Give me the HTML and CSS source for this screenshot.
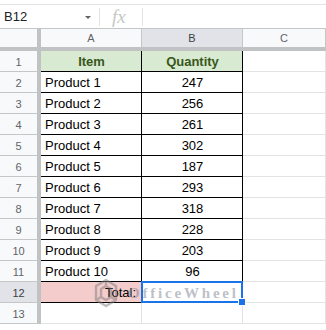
FILE: index.html
```html
<!DOCTYPE html>
<html lang="en">
<head>
    <meta charset="UTF-8">
    <title>Sheet</title>
    <link rel="stylesheet" href="styles.css">
</head>
<body>
    <div class="topbar">
        <div class="namebox">
            <span>B12</span>
            <span class="caret"></span>
        </div>
        <div class="fx">fx</div>
        <div class="formula"></div>
    </div>

    <div class="sheet">
        <div class="row head">
            <div class="rh corner"></div>
            <div class="ch">A</div>
            <div class="ch active">B</div>
            <div class="ch">C</div>
        </div>
        <div class="row">
            <div class="rh">1</div>
            <div class="cell data title">Item</div>
            <div class="cell data title center">Quantity</div>
            <div class="cell"></div>
        </div>
        <div class="row"><div class="rh">2</div><div class="cell data">Product 1</div><div class="cell data center">247</div><div class="cell"></div></div>
        <div class="row"><div class="rh">3</div><div class="cell data">Product 2</div><div class="cell data center">256</div><div class="cell"></div></div>
        <div class="row"><div class="rh">4</div><div class="cell data">Product 3</div><div class="cell data center">261</div><div class="cell"></div></div>
        <div class="row"><div class="rh">5</div><div class="cell data">Product 4</div><div class="cell data center">302</div><div class="cell"></div></div>
        <div class="row"><div class="rh">6</div><div class="cell data">Product 5</div><div class="cell data center">187</div><div class="cell"></div></div>
        <div class="row"><div class="rh">7</div><div class="cell data">Product 6</div><div class="cell data center">293</div><div class="cell"></div></div>
        <div class="row"><div class="rh">8</div><div class="cell data">Product 7</div><div class="cell data center">318</div><div class="cell"></div></div>
        <div class="row"><div class="rh">9</div><div class="cell data">Product 8</div><div class="cell data center">228</div><div class="cell"></div></div>
        <div class="row"><div class="rh">10</div><div class="cell data">Product 9</div><div class="cell data center">203</div><div class="cell"></div></div>
        <div class="row"><div class="rh">11</div><div class="cell data">Product 10</div><div class="cell data center">96</div><div class="cell"></div></div>
        <div class="row">
            <div class="rh active">12</div>
            <div class="cell total">Total:</div>
            <div class="cell selected"><span class="handle"></span></div>
            <div class="cell"></div>
        </div>
        <div class="row"><div class="rh">13</div><div class="cell"></div><div class="cell"></div><div class="cell"></div></div>

        <!-- watermark over the total row -->
        <div class="watermark">
            <svg width="24" height="30" viewBox="0 0 24 30">
                <g fill="none" stroke="#7d7d7d" stroke-width="2.4" stroke-linejoin="round">
                    <path d="M12 2 L22 8 L22 22 L12 28 L2 22 L2 8 Z"/>
                    <path d="M12 8 L17 11 L17 19 L12 22 L7 19 L7 11 Z"/>
                    <path d="M12 2 L12 8 M22 22 L17 19 M2 22 L7 19"/>
                </g>
            </svg>
            <span>OfficeWheel</span>
        </div>
    </div>
</body>
</html>
```

FILE: styles.css
```css
body {
    margin: 0;
    font-family: "Liberation Sans", Arial, sans-serif;
    background: #fff;
    overflow: hidden;
}
.topbar {
    margin-top: 4px;
    height: 24px;
    box-sizing: border-box;
    border-top: 1px solid #e1e3e6;
    display: flex;
    align-items: center;
}
.namebox {
    width: 100px;
    height: 18px;
    box-sizing: border-box;
    border-right: 1px solid #e1e3e6;
    display: flex;
    align-items: center;
    justify-content: space-between;
    padding: 0 8px 0 4px;
    font-size: 13px;
    color: #202124;
}
.caret {
    width: 0;
    height: 0;
    border-left: 3.5px solid transparent;
    border-right: 3.5px solid transparent;
    border-top: 3.5px solid #5f6368;
    margin-top: 2px;
}
.fx {
    width: 43px;
    height: 18px;
    box-sizing: border-box;
    border-right: 1px solid #e1e3e6;
    font-family: "Liberation Serif", serif;
    font-style: italic;
    font-size: 19px;
    line-height: 18px;
    color: #c4c7c5;
    padding-left: 12px;
}
.formula {
    flex: 1;
}
.sheet {
    position: relative;
}
.row {
    display: grid;
    grid-template-columns: 41px 101px 101px 1fr;
    height: 21px;
}
.row.head {
    height: 23px;
}
.rh, .ch, .cell {
    box-sizing: border-box;
    display: flex;
    align-items: center;
    overflow: hidden;
    white-space: nowrap;
}
.rh {
    background: #f8f9fa;
    border-right: 4px solid #c0c2c4;
    border-bottom: 1px solid #c4c7c5;
    justify-content: center;
    font-size: 11px;
    color: #5f6368;
    padding-top: 1px;
}
.rh.active {
    background: #e1e3e8;
    color: #3c4043;
}
.head .rh, .head .ch {
    border-top: 1px solid #c4c7c5;
    border-bottom: 4px solid #c0c2c4;
}
.ch {
    background: #f8f9fa;
    border-right: 1px solid #c4c7c5;
    justify-content: center;
    font-size: 11px;
    color: #5f6368;
}
.ch.active {
    background: #e1e3e8;
    color: #3c4043;
}
.cell {
    border-right: 1px solid #e2e3e3;
    border-bottom: 1px solid #e2e3e3;
    font-size: 13px;
    color: #000;
    padding: 1px 3px 0 4px;
}
.cell.data {
    border-right-color: #000;
    border-bottom-color: #000;
}
.cell.center {
    justify-content: center;
}
.cell.title {
    background: #d9ead3;
    color: #38571a;
    font-weight: bold;
    justify-content: center;
}
.cell.total {
    background: #f4cccc;
    border-bottom-color: #000;
    justify-content: flex-end;
    padding-right: 5px;
}
.cell.selected {
    position: relative;
    overflow: visible;
    border: 2px solid #1a73e8;
    margin-left: -1px;
    margin-top: -1px;
    height: 22px;
}
.handle {
    position: absolute;
    right: -5px;
    bottom: -5px;
    width: 6px;
    height: 6px;
    background: #1a73e8;
    border: 1px solid #fff;
}
.watermark {
    position: absolute;
    left: 94px;
    top: 250px;
    display: flex;
    align-items: center;
    gap: 10px;
    opacity: 0.5;
    pointer-events: none;
}
.watermark span {
    font-family: "Liberation Serif", serif;
    font-weight: bold;
    font-size: 15px;
    letter-spacing: 2.8px;
    color: #7e8590;
    margin-top: 1px;
}
```
